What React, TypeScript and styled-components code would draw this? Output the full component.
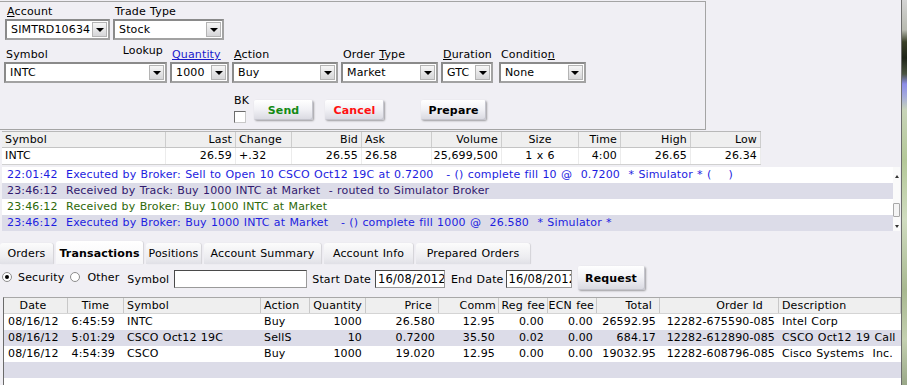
import React from 'react';
import styled, { createGlobalStyle } from 'styled-components';

const GlobalStyle = createGlobalStyle`
  *, *::before, *::after { box-sizing: border-box; }
  html, body { margin: 0; padding: 0; }
  body {
    background: #f0eff4;
    font-family: "DejaVu Sans", Verdana, sans-serif;
    font-size: 11px;
    letter-spacing: 0.15px;
    word-spacing: 0.6px;
    color: #000;
  }
`;

const Screen = styled.div`
  display: flex;
  width: 907px;
  height: 385px;
  overflow: hidden;
  background: #f0eff4;
`;

const Main = styled.div`
  width: 902px;
  flex: none;
  display: flex;
  flex-direction: column;
  padding-top: 1px;
  border-right: 1px solid #6c6c6c;
`;

const Wallpaper = styled.div`
  flex: 1;
  background: linear-gradient(
    180deg,
    #d4d4d4 0px,
    #b8bab0 30px,
    #3a4028 42px,
    #1e2418 58px,
    #4a5440 74px,
    #8c8ce8 84px,
    #a4aadc 96px,
    #c8d4b8 110px,
    #b4c898 160px,
    #d0dcc0 220px,
    #a8b890 290px,
    #c4d0b0 340px,
    #9aa888 385px
  );
`;

/* ---------- order entry panel ---------- */

const OrderPanel = styled.div`
  width: 706px;
  height: 129px;
  border-top: 1px solid #a4a4a4;
  border-right: 1px solid #a4a4a4;
  border-bottom: 1px solid #a4a4a4;
  padding: 2px 0 0 4px;
  display: flex;
  flex-direction: column;
`;

const FieldRow = styled.div<{ $mt?: number; $ml?: number }>`
  display: flex;
  align-items: flex-end;
  gap: 3px;
  margin-top: ${p => p.$mt ?? 0}px;
  margin-left: ${p => p.$ml ?? 0}px;
`;

const Field = styled.div`
  display: flex;
  flex-direction: column;
`;

const LabelRow = styled.div`
  display: flex;
  justify-content: space-between;
  align-items: flex-end;
  height: 15px;
  line-height: 14px;
  white-space: nowrap;
  padding-left: 2px;
  padding-right: 4px;
`;

const LinkLabel = styled.span`
  color: #1a1acc;
  text-decoration: underline;
`;

const RaisedLabel = styled.span`
  align-self: flex-start;
  margin-top: -3px;
`;

const SelectBox = styled.div<{ $w: number }>`
  width: ${p => p.$w}px;
  height: 21px;
  display: flex;
  align-items: center;
  background: #fff;
  border: 2px solid;
  border-color: #8a8a8a #a2a2a2 #a2a2a2 #8a8a8a;
  padding: 0 1px 0 4px;
`;

const SelectValue = styled.span`
  flex: 1;
  overflow: hidden;
  white-space: nowrap;
`;

const DropButton = styled.span`
  width: 15px;
  height: 15px;
  flex: none;
  display: flex;
  align-items: center;
  justify-content: center;
  background: linear-gradient(#f6f6f6, #d6d6d8);
  border: 1px solid #b4b4b4;
`;

const Arrow = styled.span`
  width: 0;
  height: 0;
  border-left: 4px solid transparent;
  border-right: 4px solid transparent;
  border-top: 4px solid #000;
`;

const ActionRow = styled.div`
  display: flex;
  align-items: flex-start;
  margin: 11px 0 0 230px;
`;

const BkColumn = styled.div`
  display: flex;
  flex-direction: column;
  line-height: 14px;
`;

const CheckBox = styled.span`
  width: 12px;
  height: 12px;
  margin-top: 3px;
  background: #fff;
  border: 1px solid;
  border-color: #6c6c6c #c8c8c8 #c8c8c8 #6c6c6c;
`;

const PushButton = styled.button<{ $w: number; $color?: string; $ml?: number; $mt?: number; $h?: number }>`
  width: ${p => p.$w}px;
  height: ${p => p.$h ?? 20}px;
  margin-left: ${p => p.$ml ?? 0}px;
  margin-top: ${p => p.$mt ?? 0}px;
  padding: 0;
  border: none;
  border-radius: 2px;
  background: linear-gradient(#ffffff 0%, #f2f2f6 45%, #d8d8e0 100%);
  box-shadow: 1px 1px 2px rgba(0, 0, 0, 0.35), inset -1px -1px 0 #c4c4cc;
  font-family: "DejaVu Sans", Verdana, sans-serif;
  font-size: 11px;
  font-weight: bold;
  letter-spacing: inherit;
  color: ${p => p.$color ?? '#000'};
  cursor: default;
`;

/* ---------- quote strip ---------- */

const quoteCols = '164px 70px 56px 70px 70px 70px 77px 42px 70px 70px';

const QuoteTable = styled.div`
  width: 759px;
  margin: 1px 0 0 2px;
  border-top: 1px solid #b8b8b8;
  border-bottom: 1px solid #d0d0d0;
`;

const QuoteRow = styled.div<{ $head?: boolean }>`
  display: grid;
  grid-template-columns: ${quoteCols};
  height: 16px;
  line-height: 16px;
  background: ${p => (p.$head ? '#efefef' : '#fff')};
  border-bottom: ${p => (p.$head ? '1px solid #c4c4c4' : 'none')};
`;

const Cell = styled.div<{ $align?: 'left' | 'right' | 'center'; $pl?: number; $pr?: number; $sep?: string }>`
  display: flex;
  justify-content: ${p => (p.$align === 'right' ? 'flex-end' : p.$align === 'center' ? 'center' : 'flex-start')};
  padding-left: ${p => p.$pl ?? 3}px;
  padding-right: ${p => p.$pr ?? 3}px;
  overflow: hidden;
  white-space: pre;
  border-right: 1px solid ${p => p.$sep ?? 'transparent'};
`;

/* ---------- message log ---------- */

const LogWrap = styled.div`
  width: 898px;
  margin: 2px 0 0 2px;
  display: flex;
  background: #fff;
`;

const LogList = styled.div`
  flex: 1;
`;

const toneColors = {
  blue: '#1c1ce0',
  purple: '#30186e',
  green: '#2c6808',
};

const LogRow = styled.div<{ $tone: keyof typeof toneColors; $alt?: boolean }>`
  height: 16px;
  line-height: 16px;
  padding-left: 5px;
  white-space: pre;
  overflow: hidden;
  color: ${p => toneColors[p.$tone]};
  background: ${p => (p.$alt ? '#dcdce8' : '#fff')};
`;

const ScrollBar = styled.div`
  width: 7px;
  display: flex;
  flex-direction: column;
  align-items: center;
  justify-content: space-between;
  padding: 8px 0 3px;
  background: #fafafa;
`;

const ScrollArrow = styled.span<{ $up?: boolean }>`
  width: 0;
  height: 0;
  border-left: 2px solid transparent;
  border-right: 2px solid transparent;
  border-bottom: ${p => (p.$up ? '3px solid #333' : 'none')};
  border-top: ${p => (p.$up ? 'none' : '3px solid #333')};
`;

const ScrollThumb = styled.span`
  width: 7px;
  height: 14px;
  margin-top: 16px;
  background: #f4f4f4;
  border: 1px solid #a8a8a8;
  border-radius: 1px;
`;

/* ---------- tabs ---------- */

const TabsRow = styled.div`
  display: flex;
  align-items: flex-end;
  gap: 3px;
  height: 23px;
  margin-top: 10px;
`;

const Tab = styled.div<{ $w: number; $active?: boolean }>`
  width: ${p => p.$w}px;
  height: ${p => (p.$active ? 23 : 21)}px;
  display: flex;
  align-items: center;
  justify-content: center;
  padding-top: ${p => (p.$active ? 2 : 0)}px;
  white-space: nowrap;
  font-weight: ${p => (p.$active ? 'bold' : 'normal')};
  border-radius: 3px 3px 0 0;
  background: ${p =>
    p.$active ? 'linear-gradient(#ffffff, #f6f6f8)' : 'linear-gradient(#fcfcfc, #ececf0 70%, #e0e0e6)'};
  box-shadow: 1px 0 1px rgba(0, 0, 0, 0.12);
`;

/* ---------- filter bar ---------- */

const FilterRow = styled.div`
  display: flex;
  align-items: center;
  height: 24px;
  margin-top: 2px;
  padding-left: 2px;
  white-space: nowrap;
`;

const Radio = styled.span<{ $checked?: boolean; $ml?: number }>`
  width: 10px;
  height: 10px;
  margin-left: ${p => p.$ml ?? 0}px;
  margin-top: -2px;
  border-radius: 50%;
  border: 1px solid #8c8c8c;
  background: #fff;
  display: flex;
  align-items: center;
  justify-content: center;

  &::after {
    content: '';
    width: 4px;
    height: 4px;
    border-radius: 50%;
    background: ${p => (p.$checked ? '#000' : 'transparent')};
  }
`;

const FilterText = styled.span<{ $ml?: number; $raised?: boolean }>`
  margin-left: ${p => p.$ml ?? 0}px;
  margin-top: ${p => (p.$raised ? -2 : 3)}px;
`;

const TextInput = styled.div<{ $w: number; $ml?: number }>`
  width: ${p => p.$w}px;
  height: 18px;
  margin-left: ${p => p.$ml ?? 0}px;
  margin-top: 2px;
  padding: 0 2px;
  line-height: 16px;
  font-size: 11.5px;
  overflow: hidden;
  white-space: nowrap;
  background: #fff;
  border: 1px solid;
  border-color: #4a4a4a #9a9a9a #9a9a9a #4a4a4a;
`;

/* ---------- transactions table ---------- */

const transCols = '64px 56px 137px 49px 56px 73px 60px 49px 49px 63px 119px 1fr';

const TransTable = styled.div`
  flex: 1;
  margin: 7px 0 0 3px;
  background: #fff;
  border-top: 1px solid #a8a8a8;
  border-left: 1px solid #6a6a6a;
`;

const TransRow = styled.div<{ $head?: boolean; $alt?: boolean }>`
  display: grid;
  grid-template-columns: ${transCols};
  height: 16px;
  line-height: 16px;
  background: ${p => (p.$head ? '#efefef' : p.$alt ? '#dcdce8' : '#fff')};
  border-bottom: ${p => (p.$head ? '1px solid #d4d4d4' : 'none')};
`;

type Align = 'left' | 'right' | 'center';

const quoteHead: { label: string; align: Align }[] = [
  { label: 'Symbol', align: 'left' },
  { label: 'Last', align: 'right' },
  { label: 'Change', align: 'left' },
  { label: 'Bid', align: 'right' },
  { label: 'Ask', align: 'left' },
  { label: 'Volume', align: 'right' },
  { label: 'Size', align: 'center' },
  { label: 'Time', align: 'right' },
  { label: 'High', align: 'right' },
  { label: 'Low', align: 'right' },
];

const quoteData = ['INTC', '26.59', '+.32', '26.55', '26.58', '25,699,500', '1 x 6', '4:00', '26.65', '26.34'];

const logLines: { time: string; text: string; tone: keyof typeof toneColors }[] = [
  {
    time: '22:01:42',
    text: 'Executed by Broker: Sell to Open 10 CSCO Oct12 19C at 0.7200   - () complete fill 10 @  0.7200  * Simulator * (    )',
    tone: 'blue',
  },
  {
    time: '23:46:12',
    text: 'Received by Track: Buy 1000 INTC at Market  - routed to Simulator Broker',
    tone: 'purple',
  },
  { time: '23:46:12', text: 'Received by Broker: Buy 1000 INTC at Market', tone: 'green' },
  {
    time: '23:46:12',
    text: 'Executed by Broker: Buy 1000 INTC at Market   - () complete fill 1000 @  26.580  * Simulator *',
    tone: 'blue',
  },
];

const tabs = [
  { label: 'Orders', w: 53 },
  { label: 'Transactions', w: 87, active: true },
  { label: 'Positions', w: 55 },
  { label: 'Account Summary', w: 117 },
  { label: 'Account Info', w: 89 },
  { label: 'Prepared Orders', w: 114 },
];

const transHead: { label: string; align: Align; pl?: number; pr?: number }[] = [
  { label: 'Date', align: 'center', pr: 8 },
  { label: 'Time', align: 'center' },
  { label: 'Symbol', align: 'left' },
  { label: 'Action', align: 'left' },
  { label: 'Quantity', align: 'right' },
  { label: 'Price', align: 'right', pr: 6 },
  { label: 'Comm', align: 'right', pr: 2 },
  { label: 'Reg fee', align: 'right', pr: 2 },
  { label: 'ECN fee', align: 'right', pr: 2 },
  { label: 'Total', align: 'right', pr: 7 },
  { label: 'Order Id', align: 'right', pr: 15 },
  { label: 'Description', align: 'left' },
];

const transAlign: { align: Align; pl?: number; pr?: number }[] = [
  { align: 'left', pl: 4 },
  { align: 'right', pr: 8 },
  { align: 'left' },
  { align: 'left' },
  { align: 'right' },
  { align: 'right' },
  { align: 'right' },
  { align: 'right' },
  { align: 'right' },
  { align: 'right' },
  { align: 'right' },
  { align: 'left' },
];

const transactions = [
  ['08/16/12', '6:45:59', 'INTC', 'Buy', '1000', '26.580', '12.95', '0.00', '0.00', '26592.95', '12282-675590-085', 'Intel Corp'],
  ['08/16/12', '5:01:29', 'CSCO Oct12 19C', 'SellS', '10', '0.7200', '35.50', '0.02', '0.00', '684.17', '12282-612890-085', 'CSCO Oct12 19 Call'],
  ['08/16/12', '4:54:39', 'CSCO', 'Buy', '1000', '19.020', '12.95', '0.00', '0.00', '19032.95', '12282-608796-085', 'Cisco Systems  Inc.'],
];

const Select: React.FC<{ w: number; value: string }> = ({ w, value }) => (
  <SelectBox $w={w}>
    <SelectValue>{value}</SelectValue>
    <DropButton>
      <Arrow />
    </DropButton>
  </SelectBox>
);

const App: React.FC = () => {
  return (
    <>
      <GlobalStyle />
      <Screen>
        <Main>
          <OrderPanel>
            <FieldRow $ml={1}>
              <Field>
                <LabelRow>
                  <span>
                    <u>A</u>ccount
                  </span>
                </LabelRow>
                <Select w={105} value="SIMTRD10634" />
              </Field>
              <Field>
                <LabelRow>
                  <span>Trade Type</span>
                </LabelRow>
                <Select w={111} value="Stock" />
              </Field>
            </FieldRow>

            <FieldRow $mt={7}>
              <Field>
                <LabelRow>
                  <span>Symbol</span>
                  <RaisedLabel>Lookup</RaisedLabel>
                </LabelRow>
                <Select w={163} value="INTC" />
              </Field>
              <Field>
                <LabelRow>
                  <LinkLabel>Quantity</LinkLabel>
                </LabelRow>
                <Select w={59} value="1000" />
              </Field>
              <Field>
                <LabelRow>
                  <span>
                    <u>A</u>ction
                  </span>
                </LabelRow>
                <Select w={106} value="Buy" />
              </Field>
              <Field>
                <LabelRow>
                  <span>
                    Order <u>T</u>ype
                  </span>
                </LabelRow>
                <Select w={97} value="Market" />
              </Field>
              <Field>
                <LabelRow>
                  <span>
                    <u>D</u>uration
                  </span>
                </LabelRow>
                <Select w={52} value="GTC" />
              </Field>
              <Field>
                <LabelRow>
                  <span>
                    Conditio<u>n</u>
                  </span>
                </LabelRow>
                <Select w={87} value="None" />
              </Field>
            </FieldRow>

            <ActionRow>
              <BkColumn>
                <span>BK</span>
                <CheckBox />
              </BkColumn>
              <PushButton $w={59} $ml={5} $mt={6} $color="#148a14">
                Send
              </PushButton>
              <PushButton $w={59} $ml={12} $mt={6} $color="#ff1010">
                Cancel
              </PushButton>
              <PushButton $w={65} $ml={37} $mt={6}>
                Prepare
              </PushButton>
            </ActionRow>
          </OrderPanel>

          <QuoteTable>
            <QuoteRow $head>
              {quoteHead.map(h => (
                <Cell key={h.label} $align={h.align} $sep="#cdcdcd">
                  {h.label}
                </Cell>
              ))}
            </QuoteRow>
            <QuoteRow>
              {quoteData.map((v, i) => (
                <Cell key={i} $align={quoteHead[i].align} $sep="#ececec">
                  {v}
                </Cell>
              ))}
            </QuoteRow>
          </QuoteTable>

          <LogWrap>
            <LogList>
              {logLines.map((l, i) => (
                <LogRow key={i} $tone={l.tone} $alt={i % 2 === 1}>
                  {l.time}  {l.text}
                </LogRow>
              ))}
            </LogList>
            <ScrollBar>
              <ScrollArrow $up />
              <ScrollThumb />
              <ScrollArrow />
            </ScrollBar>
          </LogWrap>

          <TabsRow>
            {tabs.map(t => (
              <Tab key={t.label} $w={t.w} $active={t.active}>
                {t.label}
              </Tab>
            ))}
          </TabsRow>

          <FilterRow>
            <Radio $checked />
            <FilterText $ml={6} $raised>
              Security
            </FilterText>
            <Radio $ml={6} />
            <FilterText $ml={7} $raised>
              Other
            </FilterText>
            <FilterText $ml={8}>Symbol</FilterText>
            <TextInput $w={133} $ml={5} />
            <FilterText $ml={5}>Start Date</FilterText>
            <TextInput $w={70} $ml={4}>
              16/08/2012
            </TextInput>
            <FilterText $ml={6}>End Date</FilterText>
            <TextInput $w={66} $ml={2}>
              16/08/2012
            </TextInput>
            <PushButton $w={67} $h={24} $ml={6}>
              Request
            </PushButton>
          </FilterRow>

          <TransTable>
            <TransRow $head>
              {transHead.map(h => (
                <Cell key={h.label} $align={h.align} $pl={h.pl} $pr={h.pr} $sep="#c8c8c8">
                  {h.label}
                </Cell>
              ))}
            </TransRow>
            {transactions.map((row, r) => (
              <TransRow key={r} $alt={r % 2 === 1}>
                {row.map((v, i) => (
                  <Cell key={i} $align={transAlign[i].align} $pl={transAlign[i].pl} $pr={transAlign[i].pr}>
                    {v}
                  </Cell>
                ))}
              </TransRow>
            ))}
            <TransRow $alt />
          </TransTable>
        </Main>
        <Wallpaper />
      </Screen>
    </>
  );
};

App.displayName = 'App';

export default App;
